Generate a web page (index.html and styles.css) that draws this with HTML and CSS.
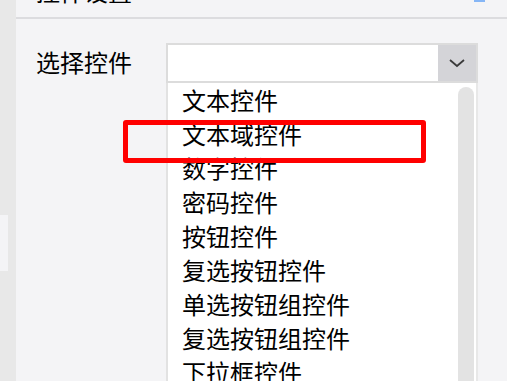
FILE: index.html
```html
<!DOCTYPE html>
<html lang="zh-CN">
<head>
<meta charset="UTF-8">
<meta name="viewport" content="width=device-width, initial-scale=1.0">
<title>控件设置</title>
<link rel="stylesheet" href="styles.css">
</head>
<body>
  <div class="page">
    <aside class="rail">
      <span class="rail-tab"></span>
    </aside>

    <section class="panel">
      <header class="panel-head">
        <h2>控件设置</h2>
        <span class="head-icon"></span>
      </header>

      <div class="panel-body">
        <div class="field">
          <label class="field-label">选择控件</label>
          <div class="select">
            <div class="select-box">
              <span class="select-value"></span>
              <span class="select-arrow">
                <svg width="18" height="10" viewBox="0 0 18 10">
                  <polyline points="2,2 9,8 16,2" fill="none" stroke="#3a3a3a" stroke-width="1.8"/>
                </svg>
              </span>
            </div>

            <!-- 下拉列表 -->
            <div class="select-list">
              <ul class="options">
                <li>文本控件</li>
                <li>文本域控件</li>
                <li>数字控件</li>
                <li>密码控件</li>
                <li>按钮控件</li>
                <li>复选按钮控件</li>
                <li>单选按钮组控件</li>
                <li>复选按钮组控件</li>
                <li>下拉框控件</li>
              </ul>
              <div class="scrollbar"><div class="thumb"></div></div>
            </div>

            <!-- 标注框 -->
            <div class="mark"></div>
          </div>
        </div>
      </div>
    </section>
  </div>
</body>
</html>
```

FILE: styles.css
```css
html, body {
  margin: 0;
  height: 100%;
}

body {
  font-family: "Noto Sans CJK SC", "Noto Sans", sans-serif;
  color: #000;
  background: #f4f4f6;
}

.page {
  display: flex;
  height: 381px;
  overflow: hidden;
}

.rail {
  width: 16px;
  flex-shrink: 0;
  background: #e8e8e8;
}

.rail-tab {
  display: block;
  width: 8px;
  height: 56px;
  margin-top: 215px;
  background: #f4f4f6;
}

.panel {
  flex: 1;
  display: flex;
  flex-direction: column;
  background: #f4f4f6;
}

.panel-head {
  height: 17px;
  display: flex;
  justify-content: space-between;
  align-items: flex-end;
  padding: 0 22px 0 20px;
  border-bottom: 2px solid #dcdcdf;
  overflow: hidden;
}

.panel-head h2 {
  margin: 0;
  padding-bottom: 14px;
  font-size: 24px;
  line-height: 24px;
  font-weight: normal;
}

.head-icon {
  align-self: flex-start;
  width: 11px;
  height: 2px;
  background: #86b6f6;
}

.panel-body {
  flex: 1;
  padding: 24px 20px 0;
  overflow: hidden;
}

.field {
  display: flex;
  align-items: flex-start;
}

.field-label {
  width: 130px;
  font-size: 24px;
  line-height: 38px;
}

.select {
  position: relative;
  width: 312px;
}

.select-box {
  display: flex;
  height: 40px;
  box-sizing: border-box;
  border: 2px solid #dcdcdc;
  background: #fff;
}

.select-value {
  flex: 1;
}

.select-arrow {
  width: 38px;
  display: flex;
  align-items: center;
  justify-content: center;
  background: #d4d4d8;
}

.select-list {
  display: flex;
  height: 300px;
  border-left: 2px solid #e2e2e2;
  border-right: 2px solid #e8e8e8;
  background: #fff;
  overflow: hidden;
}

.options {
  flex: 1;
  margin: 0;
  padding: 0 0 0 14px;
  list-style: none;
}

.options li {
  font-size: 24px;
  line-height: 34px;
  white-space: nowrap;
}

.scrollbar {
  width: 16px;
  margin-right: 2px;
  padding-top: 4px;
}

.thumb {
  height: 100%;
  background: #e3e3e3;
  border-radius: 8px 8px 0 0;
}

.mark {
  position: absolute;
  left: -43px;
  top: 77px;
  width: 303px;
  height: 43px;
  box-sizing: border-box;
  border: 5px solid #ff0000;
  border-radius: 3px;
}
```
